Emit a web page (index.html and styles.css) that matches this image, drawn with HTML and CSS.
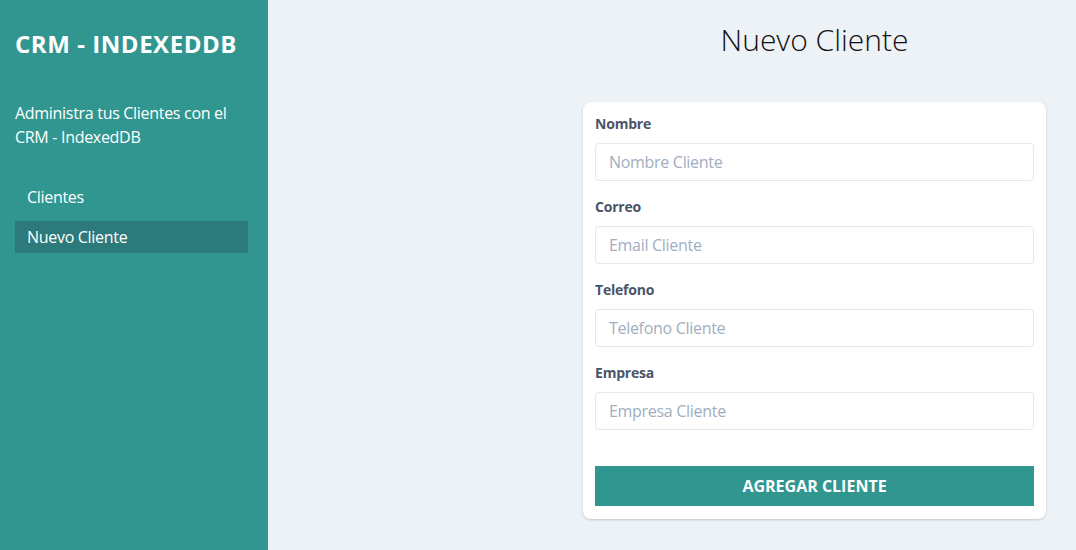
FILE: index.html
```html
<!DOCTYPE html>
<html lang="es">
<head>
<meta charset="utf-8">
<title>CRM - IndexedDB</title>
<link rel="stylesheet" href="styles.css">
</head>
<body>
<div class="layout">
  <aside class="sidebar">
    <h2 class="brand">CRM - INDEXEDDB</h2>
    <p class="tagline">Administra tus Clientes con el CRM - IndexedDB</p>
    <nav class="nav">
      <a class="nav-link" href="#">Clientes</a>
      <a class="nav-link active" href="#">Nuevo Cliente</a>
    </nav>
  </aside>
  <main class="main">
    <div class="content">
      <h1 class="title">Nuevo Cliente</h1>
      <form class="card">
        <div class="field">
          <label class="label" for="nombre">Nombre</label>
          <input class="input" id="nombre" type="text" placeholder="Nombre Cliente">
        </div>
        <div class="field">
          <label class="label" for="email">Correo</label>
          <input class="input" id="email" type="email" placeholder="Email Cliente">
        </div>
        <div class="field">
          <label class="label" for="telefono">Telefono</label>
          <input class="input" id="telefono" type="tel" placeholder="Telefono Cliente">
        </div>
        <div class="field">
          <label class="label" for="empresa">Empresa</label>
          <input class="input" id="empresa" type="text" placeholder="Empresa Cliente">
        </div>
        <button class="submit" type="button">Agregar Cliente</button>
      </form>
    </div>
  </main>
</div>
</body>
</html>
```
FILE: styles.css
```css
* { box-sizing: border-box; }
html, body { margin: 0; height: 100%; }
body {
  font-family: "Open Sans", "Noto Sans", sans-serif;
  background: #edf2f7;
  color: #1a202c;
}
.layout {
  display: flex;
  min-height: 550px;
}
.sidebar {
  width: 268px;
  flex-shrink: 0;
  background: #319690;
  padding: 26px 20px 0 15px;
  color: #fff;
}
.brand {
  margin: 0;
  font-size: 24px;
  font-weight: 700;
  letter-spacing: 0.55px;
  line-height: 36px;
}
.tagline {
  margin: 39px 0 0;
  font-size: 16px;
  line-height: 24px;
  letter-spacing: -0.3px;
}
.nav {
  display: flex;
  flex-direction: column;
  margin-top: 32px;
  gap: 8px;
}
.nav-link {
  display: block;
  color: #fff;
  text-decoration: none;
  font-size: 16px;
  line-height: 32px;
  padding: 0 12px;
  letter-spacing: -0.3px;
}
.nav-link.active { background: #2c7a7b; }
.main {
  flex: 1;
  display: flex;
  justify-content: flex-end;
  padding-right: 30px;
}
.content {
  width: 463px;
}
.title {
  margin: 20px 0 0;
  font-size: 30px;
  font-weight: 300;
  line-height: 40px;
  text-align: center;
  color: #111;
}
.card {
  margin-top: 42px;
  background: #fff;
  border-radius: 8px;
  box-shadow: 0 1px 3px rgba(0,0,0,0.12), 0 1px 2px rgba(0,0,0,0.06);
  padding: 12px 12px 13px;
}
.field { margin-bottom: 16px; }
.label {
  display: block;
  font-size: 14px;
  font-weight: 700;
  color: #4a5568;
  line-height: 20px;
  margin-bottom: 9px;
  letter-spacing: -0.2px;
}
.input {
  display: block;
  width: 100%;
  height: 38px;
  border: 1px solid #e2e8f0;
  border-radius: 4px;
  padding: 0 13px;
  font-family: inherit;
  font-size: 16px;
  color: #4a5568;
  letter-spacing: -0.3px;
}
.input::placeholder { color: #a0aec0; }
.submit {
  display: block;
  width: 100%;
  height: 40px;
  margin-top: 36px;
  border: 0;
  background: #319690;
  color: #fff;
  font-family: inherit;
  font-size: 16px;
  font-weight: 700;
  text-transform: uppercase;
  letter-spacing: 0;
  cursor: pointer;
}
.field:last-of-type { margin-bottom: 0; }
```
